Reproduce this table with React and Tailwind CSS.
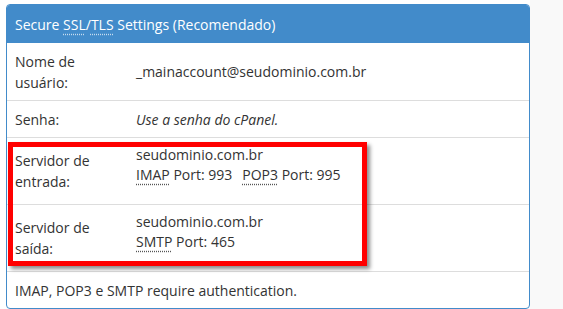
import React from "react";

const Abbr = ({ children, light }) => (
  <span
    className={`underline decoration-dotted underline-offset-[4px] ${
      light ? "decoration-white/70" : "decoration-[#555]"
    }`}
  >
    {children}
  </span>
);

const Row = ({ label, children, className = "" }) => (
  <div className={`flex items-center border-t border-[#ddd] ${className}`}>
    <div className="w-[121px] shrink-0 px-2 py-2 leading-[21px]">{label}</div>
    <div className="pl-2 pr-2 py-2">{children}</div>
  </div>
);

const App = () => {
  return (
    <div className="relative h-[309px] w-[563px] overflow-hidden bg-white font-['Open_Sans',sans-serif] text-[14px] text-[#333]">
      <div className="absolute right-0 top-0 h-full w-[33px] bg-[#f9f9f9]" />
      <div className="relative ml-[6px] mt-[4px] w-[524px] overflow-hidden rounded-[4px] border border-[#428bca] bg-white">
        <div className="flex h-[38px] items-center bg-[#428bca] px-2 text-white">
          <span>
            Secure <Abbr light>SSL</Abbr>/<Abbr light>TLS</Abbr> Settings (Recomendado)
          </span>
        </div>

        <div className="flex h-[57px] items-center">
          <div className="w-[121px] shrink-0 px-2 leading-[21px]">
            Nome de
            <br />
            usuário:
          </div>
          <div className="pl-2">_mainaccount@seudominio.com.br</div>
        </div>

        <Row label="Senha:" className="h-[37px]">
          <span className="italic">Use a senha do cPanel.</span>
        </Row>

        <div className="flex h-[67px] items-center border-t border-[#ddd]">
          <div className="w-[121px] shrink-0 px-2 leading-[21px]">
            Servidor de
            <br />
            entrada:
          </div>
          <div className="self-start pl-2 pt-[7px] leading-[20px]">
            <div>seudominio.com.br</div>
            <div>
              <Abbr>IMAP</Abbr> Port: 993
              <span className="ml-[10px]">
                <Abbr>POP3</Abbr> Port: 995
              </span>
            </div>
          </div>
        </div>

        <div className="flex h-[67px] items-center border-t border-[#ddd]">
          <div className="w-[121px] shrink-0 px-2 leading-[21px]">
            Servidor de
            <br />
            saída:
          </div>
          <div className="self-start pl-2 pt-[7px] leading-[20px]">
            <div>seudominio.com.br</div>
            <div>
              <Abbr>SMTP</Abbr> Port: 465
            </div>
          </div>
        </div>

        <div className="flex h-[37px] items-center border-t border-[#ddd] px-2">
          IMAP, POP3 e SMTP require authentication.
        </div>
      </div>

      <div className="absolute left-[8px] top-[142px] h-[124px] w-[359px] border-[5px] border-[#ff0000] shadow-[3px_3px_4px_rgba(0,0,0,0.45)]" />
    </div>
  );
};

export default App;
